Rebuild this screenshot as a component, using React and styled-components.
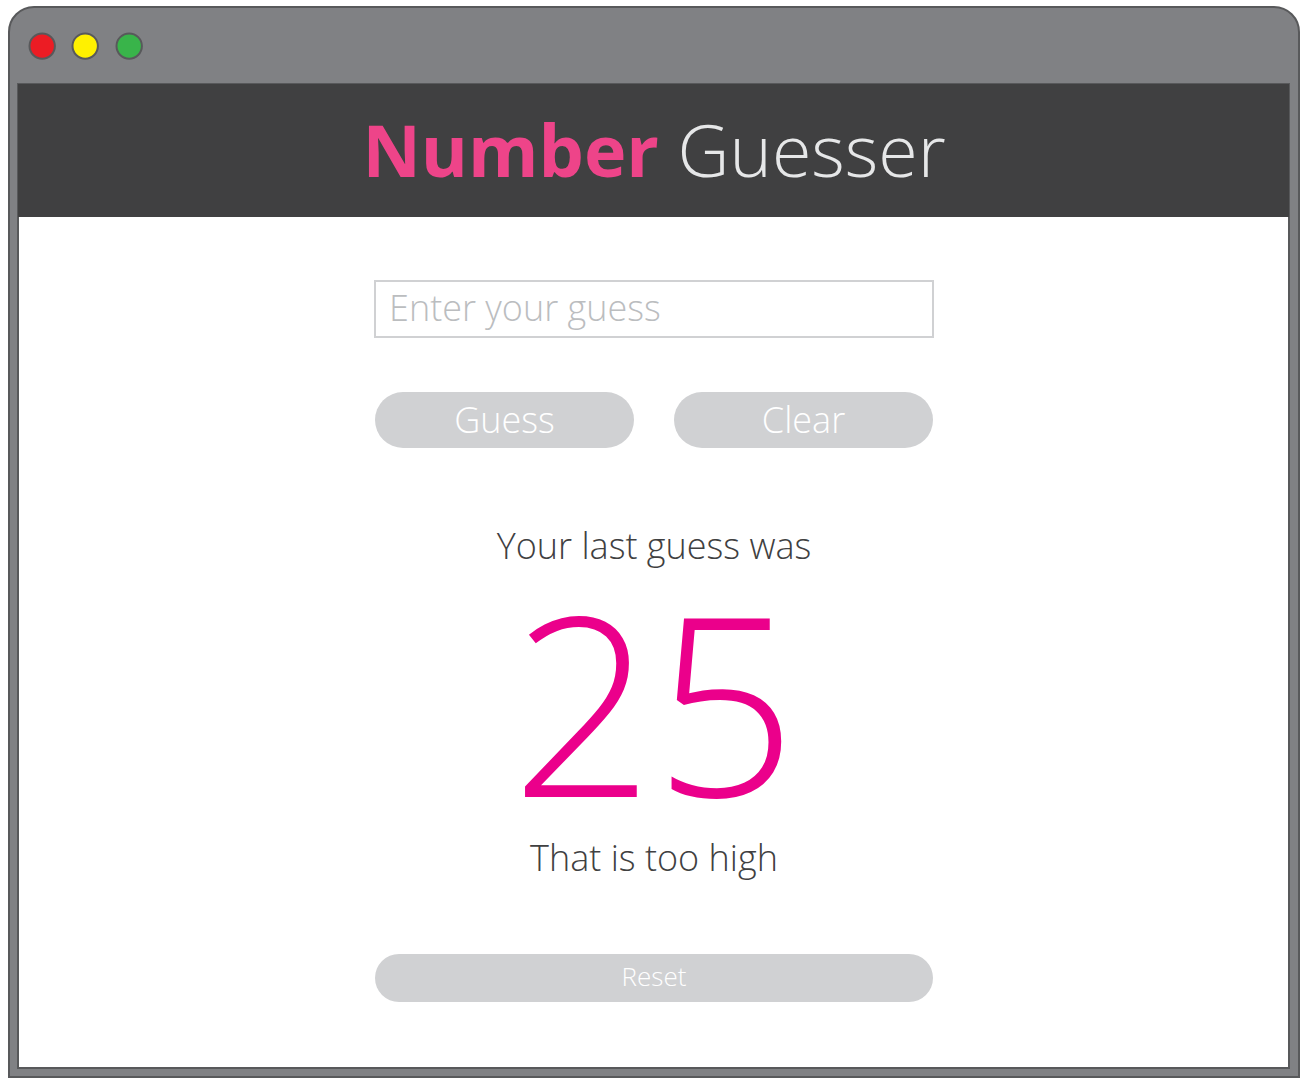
import React from "react";
import styled, { createGlobalStyle } from "styled-components";

const Global = createGlobalStyle`
  * { box-sizing: border-box; }
  body { margin: 0; background: #fff; font-family: "Open Sans", sans-serif; font-weight: 300; }
`;
const Page = styled.div`
  height: 1084px;
  padding: 6px 6px 6px 8px;
  overflow: hidden;
`;
const Browser = styled.div`
  width: 1292px;
  height: 1072px;
  display: flex;
  flex-direction: column;
  padding: 0 8px 7px 7px;
  background: #808184;
  border: 2px solid #58595b;
  border-radius: 26px 26px 0 0;
`;
const TitleBar = styled.div`
  height: 75px;
  flex: none;
  display: flex;
  gap: 13.3px;
  padding: 23px 0 0 10px;
`;
const DotIcon = styled.svg`
  width: 30px;
  height: 30px;
  fill: ${(p) => p.$color};
  stroke: #58595b;
  stroke-width: 2;
`;
const Viewport = styled.div`
  flex: 1;
  display: flex;
  flex-direction: column;
  background: #fff;
  border: 2px solid #58595b;
  border-top-width: 1px;
`;
const Header = styled.header`
  height: 133px;
  margin: 0 -1px;
  flex: none;
  display: flex;
  justify-content: center;
  background: #404041;
`;
const Title = styled.h1`
  margin: 0;
  padding-left: 1px;
  font-size: 71.8px;
  line-height: 131px;
  font-weight: 300;
  color: #e6e7e8;
  white-space: nowrap;
`;
const Accent = styled.span`
  font-weight: 700;
  color: #ee4489;
`;
const Main = styled.main`
  width: 560px;
  margin: 63px 354px 0 355px;
  display: flex;
  flex-direction: column;
`;
const Input = styled.input`
  height: 58px;
  padding: 0 13px 4px;
  border: 2px solid #d0d1d3;
  border-radius: 0;
  background: #fff;
  font: 300 36px "Open Sans", sans-serif;
  outline: 0;
  &::placeholder { color: #bbbdbf; opacity: 1; }
`;
const Actions = styled.div`
  display: flex;
  gap: 40px;
  margin: 54px 1px 0;
`;
const Button = styled.button`
  flex: ${(p) => (p.$small ? "none" : 1)};
  height: ${(p) => (p.$small ? 48 : 56)}px;
  margin: ${(p) => (p.$small ? "0 1px" : 0)};
  padding: 0 0 ${(p) => (p.$small ? 4 : 2)}px;
  border: 0;
  border-radius: 28px;
  background: #d0d1d3;
  color: #fff;
  font: 300 ${(p) => (p.$small ? 26 : 36)}px "Open Sans", sans-serif;
`;
const Result = styled.section`
  height: 506px;
  display: flex;
  flex-direction: column;
  align-items: center;
  padding-top: 73px;
`;
const Message = styled.p`
  margin: 0;
  font-size: 36px;
  line-height: 50px;
  color: #404041;
`;
const Guess = styled.div`
  height: 262px;
  font-size: 250px;
  line-height: 258px;
  color: #eb008b;
`;

const Dot = ({ color }) => (
  <DotIcon $color={color} viewBox="0 0 30 30">
    <circle cx="15.2" cy="15.1" r="12.7" />
  </DotIcon>
);

export default function App() {
  return (
    <Page>
      <Global />
      <Browser>
        <TitleBar><Dot color="#ec1c24" /><Dot color="#fff100" /><Dot color="#39b44a" /></TitleBar>
        <Viewport>
          <Header><Title><Accent>Number</Accent> Guesser</Title></Header>
          <Main>
            <Input placeholder="Enter your guess" />
            <Actions><Button>Guess</Button><Button>Clear</Button></Actions>
            <Result>
              <Message>Your last guess was</Message>
              <Guess>25</Guess>
              <Message>That is too high</Message>
            </Result>
            <Button $small>Reset</Button>
          </Main>
        </Viewport>
      </Browser>
    </Page>
  );
}
